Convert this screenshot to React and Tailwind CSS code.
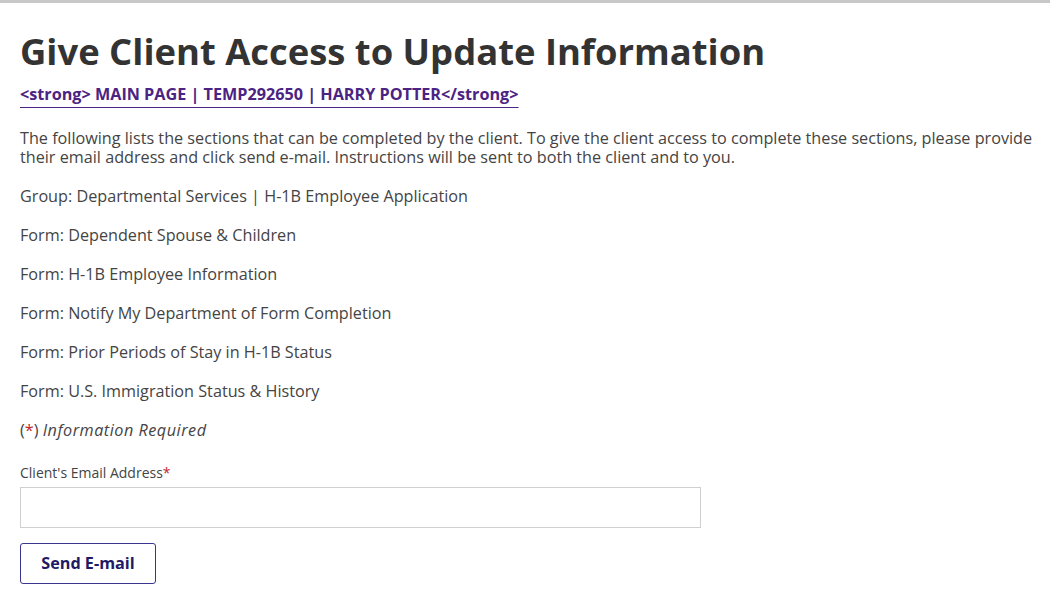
export default function App() {
  const forms = [
    "Form: Dependent Spouse & Children",
    "Form: H-1B Employee Information",
    "Form: Notify My Department of Form Completion",
    "Form: Prior Periods of Stay in H-1B Status",
    "Form: U.S. Immigration Status & History",
  ];
  return (
    <div className="w-[1050px] h-[604px] bg-white border-t-[3px] border-[#c8c8c8] overflow-hidden text-[#444444]" style={{ fontFamily: '"Open Sans", sans-serif' }}>
      <div className="pl-[20px] pr-[4px]">
        <h1 className="mt-[26px] text-[36.4px] leading-[44px] font-bold text-[#333333]">Give Client Access to Update Information</h1>
        <div className="mt-[9px]">
          <a href="#" className="text-[16.2px] leading-[20px] font-bold text-[#4b2382] underline underline-offset-[7px] decoration-[1px]">&lt;strong&gt; MAIN PAGE | TEMP292650 | HARRY POTTER&lt;/strong&gt;</a>
        </div>
        <p className="mt-[23px] text-[16.2px] leading-[19px]">The following lists the sections that can be completed by the client. To give the client access to complete these sections, please provide their email address and click send e-mail. Instructions will be sent to both the client and to you.</p>
        <div className="mt-[18px] flex flex-col gap-[17px] text-[16.2px] leading-[22px]">
          <div>Group: Departmental Services | H-1B Employee Application</div>
          {forms.map((f) => (
            <div key={f}>{f}</div>
          ))}
          <div>(<span className="text-[#c0272d]">*</span>) <em className="tracking-[0.032em]">Information Required</em></div>
        </div>
        <label className="block mt-[23px] text-[14px] leading-[18px]">Client's Email Address<span className="text-[#c0272d]">*</span></label>
        <input type="text" className="block mt-[5px] w-[681px] h-[41px] border border-[#d0d0d0] bg-white" />
        <button className="mt-[15px] w-[136px] h-[41px] border border-[#3b3690] rounded-[3px] bg-white text-[#1f1a66] text-[16.2px] font-bold">Send E-mail</button>
      </div>
    </div>
  );
}
